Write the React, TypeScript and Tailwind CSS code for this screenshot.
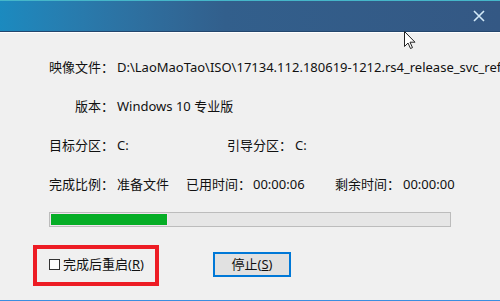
import React from "react";

export default function App() {
  return (
    <div className="relative w-[500px] h-[301px] overflow-hidden bg-[#f0f0f0] text-[13px] text-[#111] font-['Noto_Sans','Noto_Sans_CJK_SC',sans-serif] border-b border-[#3a8ee0] box-border">
      {/* title bar */}
      <div className="h-[33px] flex flex-col">
        <div className="h-[1px] bg-[#45b6c9]" />
        <div className="h-[30px] flex items-center justify-end pr-[15px] bg-linear-to-r from-[#1b8abf] from-0% via-[#325f8c] via-45% to-[#345884]">
          <svg width="12" height="12" viewBox="0 0 12 12">
            <path d="M1 1 L11 11 M11 1 L1 11" stroke="#d2e9f8" strokeWidth="1.6" fill="none" />
          </svg>
        </div>
        <div className="h-[1px] bg-[#23466d]" />
        <div className="h-[1px] bg-[#ffffff]" />
      </div>

      {/* info rows */}
      <div className="flex flex-col gap-[19px] pt-[25px]">
        <div className="flex h-[20px] items-center whitespace-nowrap">
          <div className="w-[114px] text-right shrink-0">映像文件：</div>
          <div className="ml-[3px]">D:\LaoMaoTao\ISO\17134.112.180619-1212.rs4_release_svc_refresh_CLIENTCONSUMER_RET_x64FRE_zh-cn.iso</div>
        </div>
        <div className="flex h-[20px] items-center whitespace-nowrap">
          <div className="w-[114px] text-right shrink-0">版本：</div>
          <div className="ml-[3px]">Windows 10 专业版</div>
        </div>
        <div className="flex h-[20px] items-center whitespace-nowrap">
          <div className="w-[114px] text-right shrink-0">目标分区：</div>
          <div className="ml-[3px] w-[110px]">C:</div>
          <div className="w-[68px]">引导分区：</div>
          <div>C:</div>
        </div>
        <div className="flex h-[20px] items-center whitespace-nowrap">
          <div className="w-[114px] text-right shrink-0">完成比例：</div>
          <div className="ml-[3px] w-[69px]">准备文件</div>
          <div className="w-[67px]">已用时间：</div>
          <div className="w-[82px]">00:00:06</div>
          <div className="w-[68px]">剩余时间：</div>
          <div>00:00:00</div>
        </div>
      </div>

      {/* progress */}
      <div className="mt-[17px] ml-[49px] w-[402px] h-[15px] border border-[#bcbcbc] bg-[#e6e6e6] box-border">
        <div className="h-full w-[118px] bg-[#06ad26] border border-[#f3e4f0] box-border" />
      </div>

      {/* bottom controls */}
      <div className="mt-[25px] flex items-center h-[25px] whitespace-nowrap">
        <div className="ml-[49px] flex items-center w-[164px]">
          <div className="w-[11px] h-[11px] border border-[#333] bg-white box-border" />
          <span className="ml-[3px]">完成后重启(<span className="underline">R</span>)</span>
        </div>
        <div className="w-[78px] h-[25px] border-2 border-[#0078d7] bg-[#e1e1e1] flex items-center justify-center box-border">
          <span>停止(<span className="underline">S</span>)</span>
        </div>
      </div>

      {/* red annotation box */}
      <div className="absolute left-[33px] top-[245px] w-[126px] h-[41px] border-4 border-[#ed1c24]" />

      {/* mouse cursor */}
      <svg className="absolute left-[404px] top-[31px]" width="13" height="19" viewBox="0 0 13 19">
        <path d="M0.5 0.5 L0.5 15.5 L4 12 L6.5 17.5 L8.5 16.6 L6 11.2 L11 11.2 Z" fill="#ffffff" stroke="#222" strokeWidth="1" strokeLinejoin="round" />
      </svg>
    </div>
  );
}
